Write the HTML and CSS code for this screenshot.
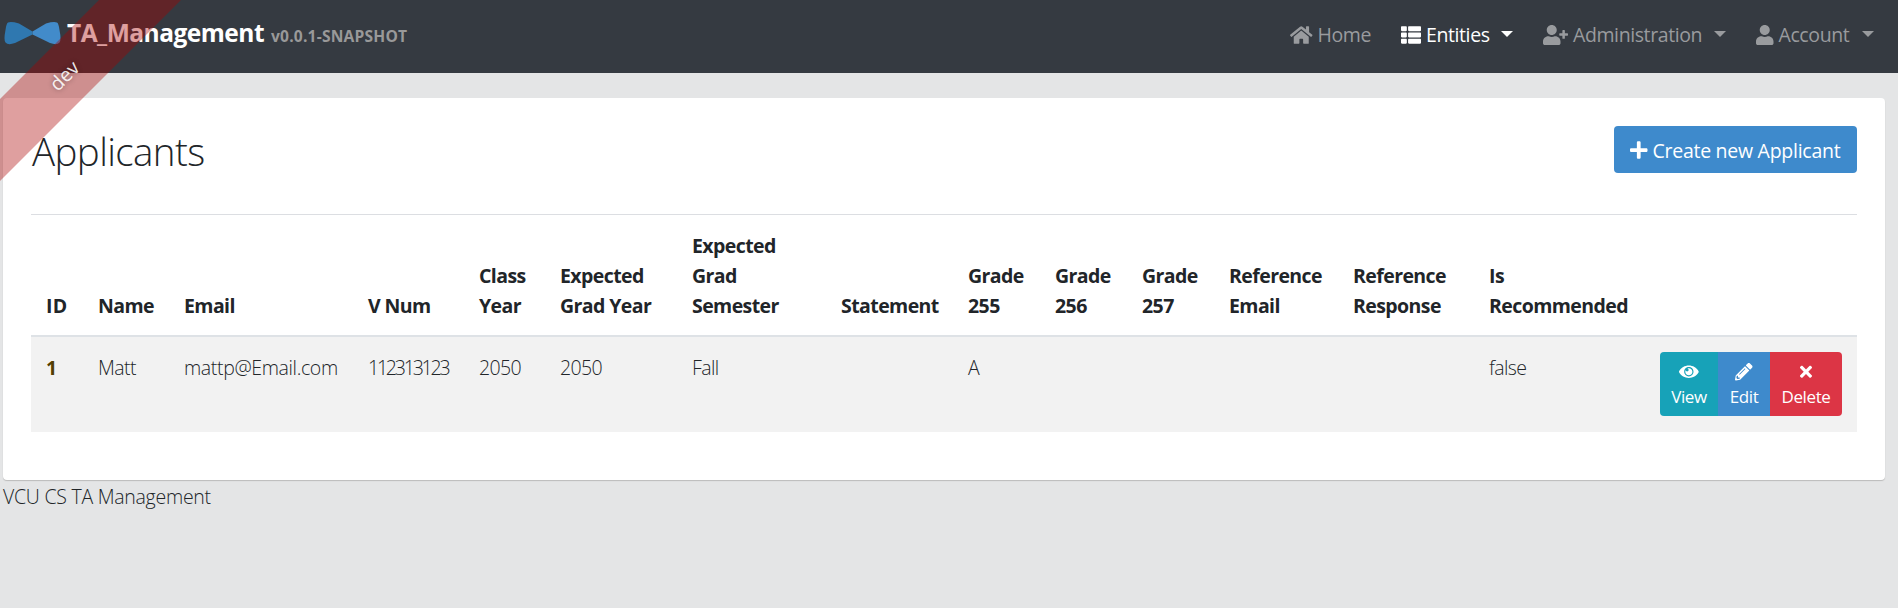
FILE: index.html
```html
<!DOCTYPE html>
<html lang="en">
<head>
<meta charset="utf-8">
<title>Applicants</title>
<link rel="stylesheet" href="styles.css">
</head>
<body>
<div class="ribbon-box"><div class="ribbon"><span>dev</span></div></div>
<nav class="navbar">
  <a class="brand">
    <svg class="logo" viewBox="0 0 57 24"><path d="M4 1.5Q7 .2 15 2.500L28.500 10.500V13.500L11 22Q4 24.500 1.500 21.500Q-.5 19 1.500 9Q2.300 2.500 4 1.500Z" fill="#2f78b0"/><path d="M53 1.500Q50 .2 42 2.500L28.500 10.500V13.500L46 22Q53 24.500 55.500 21.500Q57.500 19 55.500 9Q54.700 2.500 53 1.500Z" fill="#428bca"/></svg>
    <span class="title">TA_Management</span><span class="version">v0.0.1-SNAPSHOT</span>
  </a>
  <div class="links">
    <a class="link home"><svg viewBox="0 0 576 512" width="22.500" height="20"><path d="M280.370 148.260L96 300.110V464a16 16 0 0 0 16 16l112.060-.29a16 16 0 0 0 15.920-16V368a16 16 0 0 1 16-16h64a16 16 0 0 1 16 16v95.640a16 16 0 0 0 16 16.050L464 480a16 16 0 0 0 16-16V300L295.670 148.260a12.190 12.190 0 0 0-15.300 0zM571.600 251.470L488 182.560V44.050a12 12 0 0 0-12-12h-56a12 12 0 0 0-12 12v72.610L318.470 43a48 48 0 0 0-61 0L4.340 251.470a12 12 0 0 0-1.600 16.900l25.500 31A12 12 0 0 0 45.150 301l235.220-193.740a12.190 12.190 0 0 1 15.300 0L530.900 301a12 12 0 0 0 16.900-1.600l25.500-31a12 12 0 0 0-1.700-16.930z"/></svg><span>Home</span></a>
    <a class="link entities active"><svg viewBox="0 0 512 512" width="20" height="20"><path d="M149.333 216v80c0 13.255-10.745 24-24 24H24c-13.255 0-24-10.745-24-24v-80c0-13.255 10.745-24 24-24h101.333c13.255 0 24 10.745 24 24zM0 376v80c0 13.255 10.745 24 24 24h101.333c13.255 0 24-10.745 24-24v-80c0-13.255-10.745-24-24-24H24c-13.255 0-24 10.745-24 24zM125.333 32H24C10.745 32 0 42.745 0 56v80c0 13.255 10.745 24 24 24h101.333c13.255 0 24-10.745 24-24V56c0-13.255-10.745-24-24-24zm80 448H488c13.255 0 24-10.745 24-24v-80c0-13.255-10.745-24-24-24H205.333c-13.255 0-24 10.745-24 24v80c0 13.255 10.745 24 24 24zm-24-424v80c0 13.255 10.745 24 24 24H488c13.255 0 24-10.745 24-24V56c0-13.255-10.745-24-24-24H205.333c-13.255 0-24 10.745-24 24zm24 264H488c13.255 0 24-10.745 24-24v-80c0-13.255-10.745-24-24-24H205.333c-13.255 0-24 10.745-24 24v80c0 13.255 10.745 24 24 24z"/></svg><span>Entities</span><i class="caret"></i></a>
    <a class="link admin"><svg viewBox="0 0 640 512" width="25" height="20"><path d="M624 208h-64v-64c0-8.800-7.200-16-16-16h-32c-8.800 0-16 7.200-16 16v64h-64c-8.800 0-16 7.200-16 16v32c0 8.800 7.200 16 16 16h64v64c0 8.800 7.200 16 16 16h32c8.800 0 16-7.200 16-16v-64h64c8.800 0 16-7.200 16-16v-32c0-8.800-7.200-16-16-16zM224 256c70.700 0 128-57.300 128-128S294.700 0 224 0 96 57.300 96 128s57.300 128 128 128zm89.600 32h-16.700c-22.200 10.200-46.900 16-72.900 16s-50.600-5.800-72.900-16h-16.700C60.200 288 0 348.200 0 422.400V464c0 26.500 21.500 48 48 48h352c26.500 0 48-21.500 48-48v-41.600c0-74.200-60.200-134.400-134.400-134.400z"/></svg><span>Administration</span><i class="caret"></i></a>
    <a class="link account"><svg viewBox="0 0 448 512" width="17.500" height="20"><path d="M224 256c70.700 0 128-57.300 128-128S294.700 0 224 0 96 57.300 96 128s57.300 128 128 128zm89.600 32h-16.700c-22.200 10.200-46.900 16-72.900 16s-50.600-5.800-72.900-16h-16.700C60.200 288 0 348.200 0 422.400V464c0 26.500 21.500 48 48 48h352c26.500 0 48-21.500 48-48v-41.600c0-74.200-60.200-134.400-134.400-134.400z"/></svg><span>Account</span><i class="caret"></i></a>
  </div>
</nav>
<main class="card">
  <header class="head">
    <h1>Applicants</h1>
    <button class="create"><svg viewBox="0 0 448 512" width="17.500" height="20"><path d="M416 208H272V64c0-17.670-14.330-32-32-32h-32c-17.670 0-32 14.330-32 32v144H32c-17.670 0-32 14.330-32 32v32c0 17.670 14.330 32 32 32h144v144c0 17.670 14.330 32 32 32h32c17.670 0 32-14.330 32-32V304h144c17.670 0 32-14.330 32-32v-32c0-17.670-14.330-32-32-32z"/></svg><span>Create new Applicant</span></button>
  </header>
  <table>
    <colgroup><col class="c-id"><col class="c-name"><col class="c-email"><col class="c-vnum"><col class="c-year"><col class="c-gyear"><col class="c-sem"><col class="c-stmt"><col class="c-grade"><col class="c-grade"><col class="c-grade"><col class="c-remail"><col class="c-rresp"><col class="c-rec"><col class="c-act"></colgroup>
    <thead><tr><th class="th-id">ID</th><th>Name</th><th>Email</th><th>V Num</th><th>Class<br>Year</th><th>Expected<br>Grad Year</th><th>Expected<br>Grad<br>Semester</th><th>Statement</th><th>Grade<br>255</th><th>Grade<br>256</th><th>Grade<br>257</th><th>Reference<br>Email</th><th>Reference<br>Response</th><th>Is<br>Recommended</th><th></th></tr></thead>
    <tbody><tr><td class="id">1</td><td>Matt</td><td class="email">mattp@Email.com</td><td class="vnum">112313123</td><td>2050</td><td>2050</td><td>Fall</td><td></td><td>A</td><td></td><td></td><td></td><td></td><td>false</td>
      <td class="actions"><div class="group">
        <button class="btn view"><svg viewBox="0 0 576 512" width="19.700" height="17.500"><path d="M569.354 231.631C512.969 135.949 407.810 72 288 72 168.140 72 63.004 135.994 6.646 231.631a47.999 47.999 0 0 0 0 48.739C63.031 376.051 168.190 440 288 440c119.860 0 224.996-63.994 281.354-159.631a47.997 47.997 0 0 0 0-48.738zM288 392c-75.162 0-136-60.827-136-136 0-75.162 60.826-136 136-136 75.162 0 136 60.826 136 136 0 75.162-60.826 136-136 136zm104-136c0 57.438-46.562 104-104 104s-104-46.562-104-104c0-17.708 4.431-34.379 12.236-48.973l-.001.032c0 23.651 19.173 42.823 42.824 42.823s42.824-19.173 42.824-42.823c0-23.651-19.173-42.824-42.824-42.824l-.032.001C253.621 156.431 270.292 152 288 152c57.438 0 104 46.562 104 104z"/></svg><span>View</span></button>
        <button class="btn edit"><svg viewBox="0 0 512 512" width="17.500" height="17.500"><path d="M497.900 142.100l-46.100 46.100c-4.700 4.700-12.300 4.700-17 0l-111-111c-4.700-4.700-4.700-12.300 0-17l46.100-46.100c18.700-18.700 49.100-18.700 67.900 0l60.100 60.100c18.800 18.700 18.800 49.100 0 67.900zM284.200 99.800L21.600 362.400.4 483.900c-2.900 16.400 11.400 30.600 27.800 27.800l121.500-21.300 262.600-262.600c4.700-4.700 4.700-12.300 0-17l-111-111c-4.800-4.700-12.400-4.700-17.100 0zM124.100 339.900c-5.500-5.500-5.500-14.300 0-19.800l154-154c5.500-5.500 14.300-5.500 19.800 0s5.500 14.300 0 19.800l-154 154c-5.500 5.500-14.300 5.500-19.800 0zM88 424h48v36.300l-64.500 11.300-31.100-31.100L51.700 376H88v48z"/></svg><span>Edit</span></button>
        <button class="btn delete"><svg viewBox="0 0 352 512" width="12" height="17.500"><path d="M242.720 256l100.070-100.070c12.280-12.280 12.280-32.190 0-44.480l-22.240-22.240c-12.280-12.280-32.190-12.280-44.480 0L176 189.280 75.930 89.210c-12.280-12.280-32.190-12.280-44.480 0L9.210 111.450c-12.280 12.280-12.280 32.190 0 44.480L109.280 256 9.210 356.070c-12.280 12.280-12.280 32.190 0 44.480l22.240 22.240c12.280 12.280 32.200 12.280 44.480 0L176 322.720l100.070 100.070c12.280 12.280 32.200 12.280 44.480 0l22.240-22.240c12.280-12.280 12.280-32.190 0-44.480L242.720 256z"/></svg><span>Delete</span></button>
      </div></td></tr></tbody>
  </table>
</main>
<footer>VCU CS TA Management</footer>
</body>
</html>
```

FILE: styles.css
```css
* { box-sizing: border-box; }
body { margin: 0; height: 608px; overflow: hidden; background: #e4e5e6; color: #212529; font: 300 19.5px/30px "Open Sans", "Noto Sans", sans-serif; }
svg { display: block; flex: none; fill: currentColor; }
.navbar { height: 73px; background: #353a41; display: flex; justify-content: space-between; align-items: flex-start; padding: 0 24px 0 4px; }
.brand { display: flex; align-items: baseline; font-weight: 700; color: #fff; padding-top: 15px; }
.logo { width: 57px; height: 24px; margin-right: 6px; align-self: center; }
.title { font-size: 24.5px; line-height: 35px; letter-spacing: -.5px; width: 204px; white-space: nowrap; }
.version { font-size: 15.6px; letter-spacing: .2px; color: #999; white-space: nowrap; }
.links { display: flex; padding-top: 20px; }
.link { display: flex; align-items: center; gap: 5px; color: #999b9e; font-weight: 400; white-space: nowrap; letter-spacing: -.4px; }
.link.active { color: #fff; }
.link span { flex: 1; }
.home { width: 111px; }
.entities { width: 112px; margin-right: 30px; }
.admin { width: 183px; margin-right: 30px; }
.account { width: 118px; }
.caret { border: 6px solid transparent; border-top-color: currentColor; border-bottom: 0; margin-top: -2px; }
.ribbon-box { position: absolute; top: 0; left: 0; width: 190px; height: 190px; overflow: hidden; pointer-events: none; }
.ribbon { position: absolute; left: -85.5px; top: 45.5px; width: 300px; height: 58px; transform: rotate(-45deg); background: rgba(170,0,0,.375); color: rgba(255,255,255,.9); font-weight: 400; text-align: center; line-height: 58px; text-indent: -2px; text-shadow: 0 0 5px rgba(0,0,0,.4); }
.card { width: 1882px; height: 382px; margin: 25px 0 0 3px; padding: 28px; background: #fff; border-radius: 4px; box-shadow: 0 1px 1px #bbb; }
.head { display: flex; justify-content: space-between; align-items: flex-start; height: 88px; }
h1 { margin: 0; padding: 1px 0 0 1px; font-size: 38.5px; line-height: 48px; font-weight: 300; letter-spacing: -.6px; }
.create { display: flex; align-items: center; gap: 5px; width: 243px; height: 47px; padding: 0 0 0 16px; border: 0; border-radius: 4px; background: #3e8acc; color: #fff; font: inherit; font-weight: 400; letter-spacing: -.27px; white-space: nowrap; }
.create span { padding-top: 2px; }
table { width: 1826px; table-layout: fixed; border-collapse: separate; border-spacing: 0; white-space: nowrap; }
th, td { padding: 16px 0 14px 15px; text-align: left; vertical-align: top; }
th { vertical-align: bottom; font-weight: 700; letter-spacing: -.58px; border-top: 1px solid #dcdee2; border-bottom: 2px solid #dee2e6; }
.th-id { letter-spacing: .4px; }
td { background: #f2f2f2; letter-spacing: -.6px; height: 95px; }
.email { letter-spacing: -.36px; }
.vnum { letter-spacing: -2.2px; }
.actions { padding-top: 15px; }
.id { font-weight: 700; color: #533f03; }
.c-id { width: 52px; } .c-name { width: 86px; } .c-email { width: 184px; } .c-vnum { width: 111px; }
.c-year { width: 81px; } .c-gyear { width: 132px; } .c-sem { width: 149px; } .c-stmt { width: 127px; }
.c-grade { width: 87px; } .c-remail { width: 124px; } .c-rresp { width: 136px; } .c-rec { width: 171px; } .c-act { width: 212px; }
.group { display: flex; width: 182px; height: 64px; border-radius: 4px; overflow: hidden; }
.btn { border: 0; padding: 11px 0 0; display: flex; flex-direction: column; align-items: center; color: #fff; font: 400 17px/26px "Open Sans", sans-serif; letter-spacing: -.4px; }
.btn span { margin-top: 3px; }
.view { width: 58px; background: #17a2b8; }
.edit { width: 52px; background: #3e8acc; }
.delete { width: 72px; background: #dc3545; }
footer { padding-left: 3px; margin-top: 2px; letter-spacing: -.26px; }
```
